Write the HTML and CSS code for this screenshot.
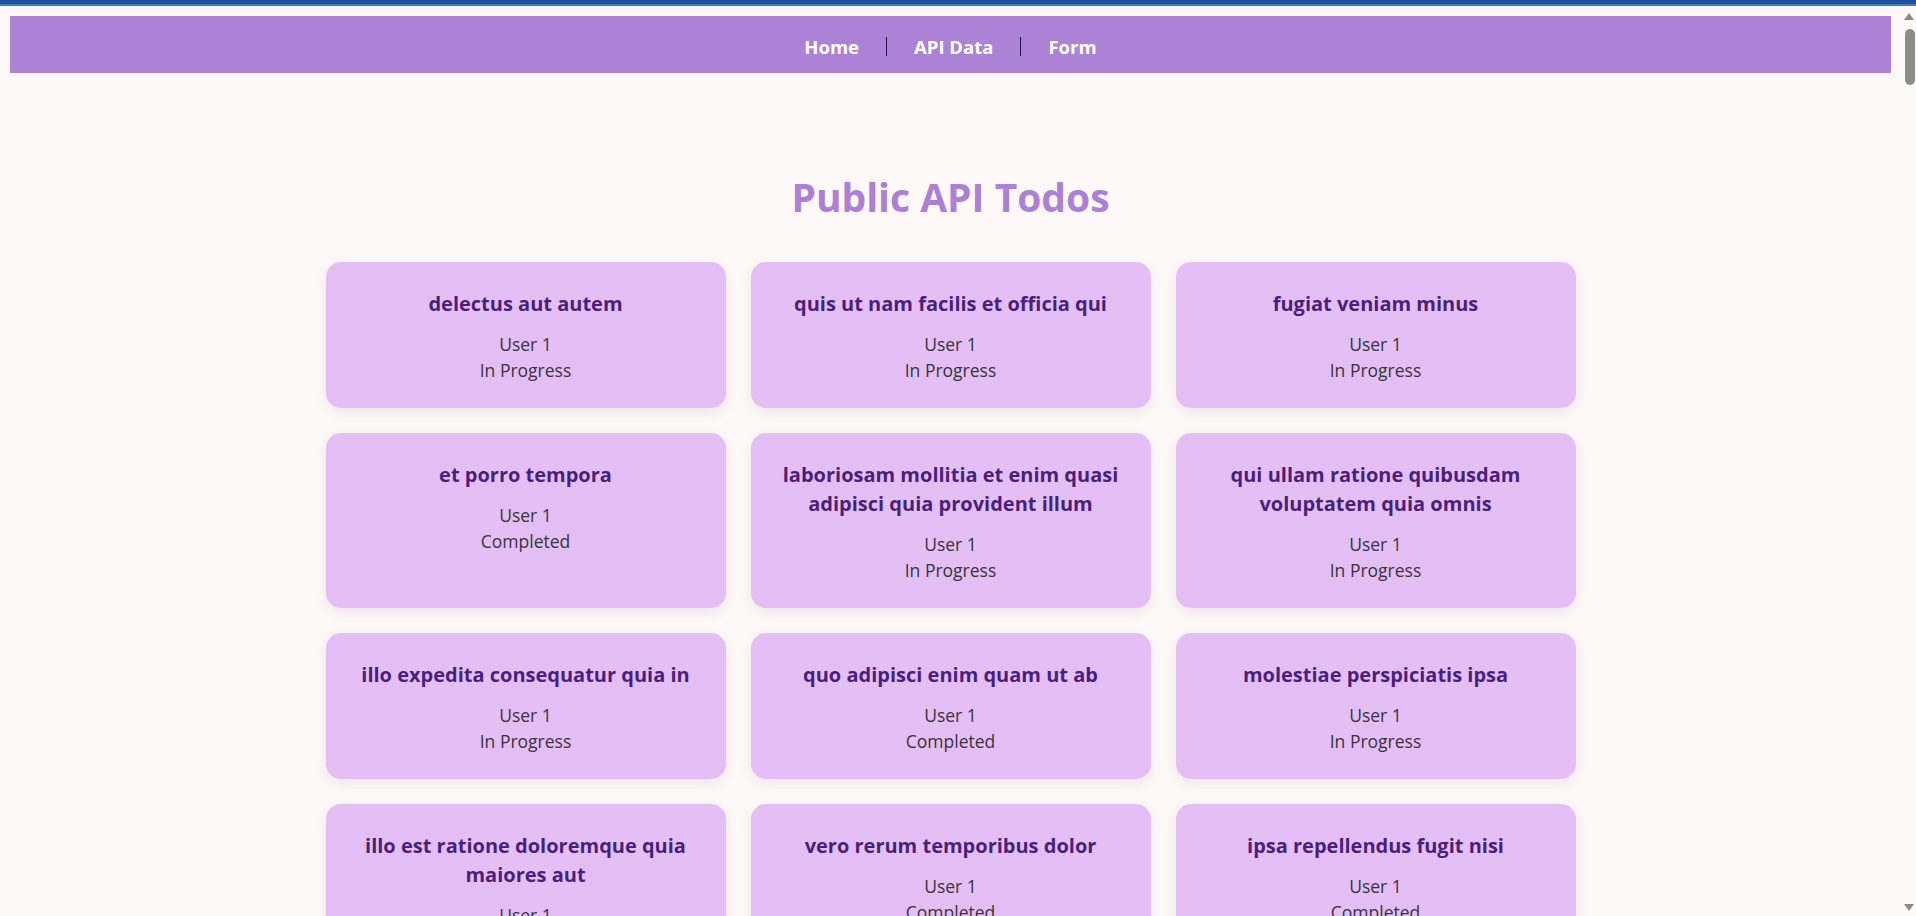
FILE: index.html
```html
<!DOCTYPE html>
<html lang="en">
<head>
<meta charset="utf-8">
<title>Public API Todos</title>
<link rel="stylesheet" href="styles.css">
</head>
<body>
<div class="topbar"></div>
<div class="page">
  <nav class="nav">
    <a class="nav-link" href="#">Home</a>
    <span class="nav-sep"></span>
    <a class="nav-link" href="#">API Data</a>
    <span class="nav-sep"></span>
    <a class="nav-link" href="#">Form</a>
  </nav>
  <main class="main">
    <h1 class="title">Public API Todos</h1>
    <div class="grid">
      <div class="card"><h3 class="card-title">delectus aut autem</h3><p class="card-text">User 1</p><p class="card-text">In Progress</p></div>
      <div class="card"><h3 class="card-title">quis ut nam facilis et officia qui</h3><p class="card-text">User 1</p><p class="card-text">In Progress</p></div>
      <div class="card"><h3 class="card-title">fugiat veniam minus</h3><p class="card-text">User 1</p><p class="card-text">In Progress</p></div>
      <div class="card"><h3 class="card-title">et porro tempora</h3><p class="card-text">User 1</p><p class="card-text">Completed</p></div>
      <div class="card"><h3 class="card-title">laboriosam mollitia et enim quasi adipisci quia provident illum</h3><p class="card-text">User 1</p><p class="card-text">In Progress</p></div>
      <div class="card"><h3 class="card-title">qui ullam ratione quibusdam voluptatem quia omnis</h3><p class="card-text">User 1</p><p class="card-text">In Progress</p></div>
      <div class="card"><h3 class="card-title">illo expedita consequatur quia in</h3><p class="card-text">User 1</p><p class="card-text">In Progress</p></div>
      <div class="card"><h3 class="card-title">quo adipisci enim quam ut ab</h3><p class="card-text">User 1</p><p class="card-text">Completed</p></div>
      <div class="card"><h3 class="card-title">molestiae perspiciatis ipsa</h3><p class="card-text">User 1</p><p class="card-text">In Progress</p></div>
      <div class="card"><h3 class="card-title">illo est ratione doloremque quia maiores aut</h3><p class="card-text">User 1</p><p class="card-text">Completed</p></div>
      <div class="card"><h3 class="card-title">vero rerum temporibus dolor</h3><p class="card-text">User 1</p><p class="card-text">Completed</p></div>
      <div class="card"><h3 class="card-title">ipsa repellendus fugit nisi</h3><p class="card-text">User 1</p><p class="card-text">Completed</p></div>
      <div class="card"><h3 class="card-title">et doloremque nulla</h3><p class="card-text">User 1</p><p class="card-text">In Progress</p></div>
      <div class="card"><h3 class="card-title">repellendus sunt dolores architecto voluptatum</h3><p class="card-text">User 1</p><p class="card-text">Completed</p></div>
      <div class="card"><h3 class="card-title">ab voluptatum amet voluptas</h3><p class="card-text">User 1</p><p class="card-text">Completed</p></div>
      <div class="card"><h3 class="card-title">accusamus eos facilis sint et aut voluptatem</h3><p class="card-text">User 1</p><p class="card-text">Completed</p></div>
      <div class="card"><h3 class="card-title">quo laboriosam deleniti aut qui</h3><p class="card-text">User 1</p><p class="card-text">Completed</p></div>
      <div class="card"><h3 class="card-title">dolorum est consequatur ea mollitia in culpa</h3><p class="card-text">User 1</p><p class="card-text">In Progress</p></div>
      <div class="card"><h3 class="card-title">molestiae ipsa aut voluptatibus pariatur dolor nihil</h3><p class="card-text">User 1</p><p class="card-text">Completed</p></div>
      <div class="card"><h3 class="card-title">ullam nobis libero sapiente ad optio sint</h3><p class="card-text">User 1</p><p class="card-text">Completed</p></div>
    </div>
  </main>
</div>
<div class="scrollbar" aria-hidden="true">
  <span class="sb-arrow sb-up"></span>
  <span class="sb-thumb"></span>
  <span class="sb-space"></span>
  <span class="sb-arrow sb-down"></span>
</div>
</body>
</html>
```

FILE: styles.css
```css
html {
  background: #fef8f8;
}
body {
  margin: 0;
  font-family: "Open Sans", "Noto Sans", sans-serif;
  background: #fef8f8;
  color: #333333;
}
.topbar {
  height: 4px;
  background: #1a52a0;
  border-bottom: 2px solid #4a78b2;
}
.page {
  padding: 10px 25px 0 10px;
}
.nav {
  height: 57px;
  background: #ab82d6;
  display: flex;
  align-items: center;
  justify-content: center;
}
.nav-link {
  color: #ffffff;
  font-weight: 700;
  font-size: 18.5px;
  text-decoration: none;
  padding: 3px 27px 0;
}
.nav-sep {
  width: 1px;
  height: 19px;
  margin-top: 3px;
  background: #1c1450;
}
.main {
  padding-top: 98px;
}
.title {
  margin: 0 0 40px;
  text-align: center;
  color: #ab80d5;
  font-size: 39px;
  font-weight: 700;
  line-height: 51px;
}
.grid {
  width: 1250px;
  margin: 0 auto;
  display: grid;
  grid-template-columns: repeat(3, 1fr);
  gap: 25px;
}
.card {
  background: #e4bff5;
  border-radius: 15px;
  padding: 27px 20px 25px;
  text-align: center;
  box-shadow: 0 4px 12px rgba(120, 90, 110, 0.12);
}
.card-title {
  margin: 0 0 13px;
  color: #4a1f7c;
  font-size: 20px;
  font-weight: 700;
  line-height: 29px;
}
.card-text {
  margin: 0;
  font-size: 17.5px;
  line-height: 26px;
  color: #3a3340;
}
.scrollbar {
  position: fixed;
  top: 6px;
  right: 0;
  bottom: 0;
  width: 17px;
  background: #fdf9f9;
  display: flex;
  flex-direction: column;
  align-items: center;
}
.sb-arrow {
  width: 0;
  height: 0;
  border-left: 5px solid transparent;
  border-right: 5px solid transparent;
  margin-left: 2px;
}
.sb-up {
  margin-top: 7px;
  border-bottom: 7px solid #8b8b8b;
}
.sb-down {
  margin-bottom: 5px;
  border-top: 7px solid #8b8b8b;
}
.sb-thumb {
  margin-top: 9px;
  margin-left: 4px;
  width: 10px;
  height: 56px;
  border-radius: 5px;
  background: #8b8b8b;
}
.sb-space {
  flex: 1;
}
```
